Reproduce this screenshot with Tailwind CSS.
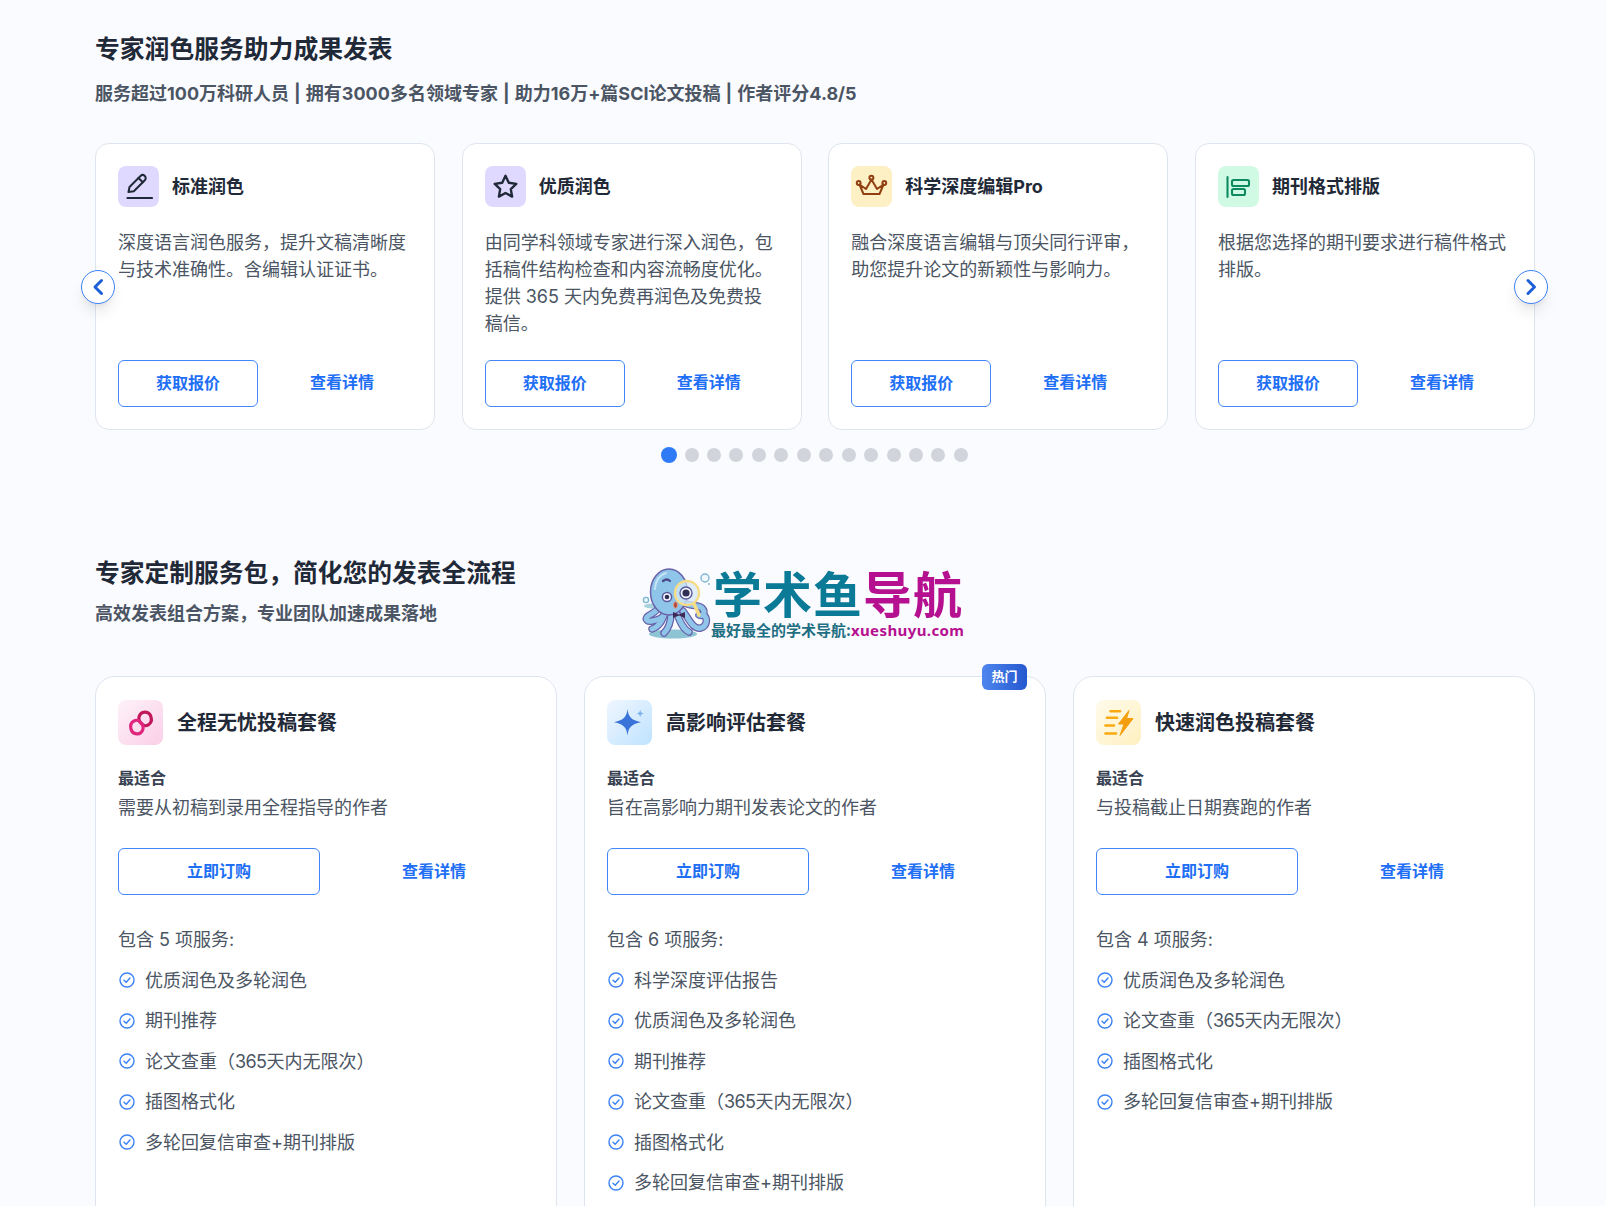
<!DOCTYPE html>
<html lang="zh">
<head>
<meta charset="utf-8">
<script src="https://cdn.jsdelivr.net/npm/@tailwindcss/browser@4"></script>
</head>
<body class="bg-[#fafbff] font-['Inter','Noto_Sans_CJK_SC',sans-serif] text-[#1f2937]">
<div class="h-[1206px] overflow-hidden">
<main class="relative w-[1440px] ml-[95px]">
  <div class="pt-[33px]">

  <section>
    <h2 class="text-[24.8px] leading-[32px] font-bold text-[#1f2937]">专家润色服务助力成果发表</h2>
    <p class="mt-[15px] text-[18px] leading-[27px] font-bold text-[#4b5563] [word-spacing:0.8px]">服务超过100万科研人员 | 拥有3000多名领域专家 | 助力16万+篇SCI论文投稿 | 作者评分4.8/5</p>

    <div class="relative mt-[36px]">
      <div class="flex gap-[26.67px]">
        <article class="w-[340px] h-[287px] bg-white border border-[#dfe5ee] rounded-[14px] px-[22px] pt-[22px] pb-[22.5px] flex flex-col">
          <div class="flex items-center gap-[13px] h-[41px]">
            <span class="w-[41px] h-[41px] rounded-lg bg-[#e0d9ff] flex items-center justify-center shrink-0">
              <svg class="w-[28px] h-[28px]" viewBox="0 0 28 28" fill="none" stroke="#1f2937" stroke-width="2" stroke-linecap="round" stroke-linejoin="round"><path d="M3.5 19 L4.5 14 L15.5 3 a3 3 0 0 1 4.3 4.3 L8.8 18.3 Z"/><path d="M13.5 5 L17.8 9.3"/><path d="M2.5 25 H27" stroke-width="2.2"/></svg>
            </span>
            <h3 class="text-[18px] leading-[27px] font-bold text-[#1f2937]">标准润色</h3>
          </div>
          <p class="mt-[22px] text-[18px] leading-[27px] text-[#4b5563]">深度语言润色服务，提升文稿清晰度与技术准确性。含编辑认证证书。</p>
          <div class="mt-auto flex gap-[14px]">
            <a class="w-[140px] h-[47px] border-[1.5px] border-[#4287f5] rounded-md flex items-center justify-center text-[16px] font-semibold text-[#1e6ff5]">获取报价</a>
            <a class="w-[140px] h-[47px] flex items-center justify-center text-[16px] font-semibold text-[#1e6ff5] pb-[2px]">查看详情</a>
          </div>
        </article>

        <article class="w-[340px] h-[287px] bg-white border border-[#dfe5ee] rounded-[14px] px-[22px] pt-[22px] pb-[22.5px] flex flex-col">
          <div class="flex items-center gap-[13px] h-[41px]">
            <span class="w-[41px] h-[41px] rounded-lg bg-[#e0d9ff] flex items-center justify-center shrink-0">
              <svg class="w-[27px] h-[27px]" viewBox="0 0 24 24" fill="none" stroke="#1f2937" stroke-width="2.1" stroke-linejoin="round"><path d="M12 2.5 l2.9 6.2 6.7 .9 -4.9 4.7 1.2 6.7 -5.9-3.3 -5.9 3.3 1.2-6.7 -4.9-4.7 6.7-.9 Z"/></svg>
            </span>
            <h3 class="text-[18px] leading-[27px] font-bold text-[#1f2937]">优质润色</h3>
          </div>
          <p class="mt-[22px] text-[18px] leading-[27px] text-[#4b5563]">由同学科领域专家进行深入润色，包括稿件结构检查和内容流畅度优化。提供 365 天内免费再润色及免费投稿信。</p>
          <div class="mt-auto flex gap-[14px]">
            <a class="w-[140px] h-[47px] border-[1.5px] border-[#4287f5] rounded-md flex items-center justify-center text-[16px] font-semibold text-[#1e6ff5]">获取报价</a>
            <a class="w-[140px] h-[47px] flex items-center justify-center text-[16px] font-semibold text-[#1e6ff5] pb-[2px]">查看详情</a>
          </div>
        </article>

        <article class="w-[340px] h-[287px] bg-white border border-[#dfe5ee] rounded-[14px] px-[22px] pt-[22px] pb-[22.5px] flex flex-col">
          <div class="flex items-center gap-[13px] h-[41px]">
            <span class="w-[41px] h-[41px] rounded-lg bg-[#fdf0c4] shrink-0">
              <svg class="w-[41px] h-[41px]" viewBox="0 0 41 41" fill="none" stroke="#8f3f10" stroke-width="2" stroke-linecap="round" stroke-linejoin="round"><path d="M8.5 18.5 L12.5 28 H28.5 L32.5 18.5 L26 23 L20.5 13.5 L15 23 Z"/><circle cx="7.7" cy="17" r="1.9"/><circle cx="20.4" cy="11.7" r="2"/><circle cx="33.3" cy="17" r="1.9"/></svg>
            </span>
            <h3 class="text-[18px] leading-[27px] font-bold text-[#1f2937]">科学深度编辑Pro</h3>
          </div>
          <p class="mt-[22px] text-[18px] leading-[27px] text-[#4b5563]">融合深度语言编辑与顶尖同行评审，助您提升论文的新颖性与影响力。</p>
          <div class="mt-auto flex gap-[14px]">
            <a class="w-[140px] h-[47px] border-[1.5px] border-[#4287f5] rounded-md flex items-center justify-center text-[16px] font-semibold text-[#1e6ff5]">获取报价</a>
            <a class="w-[140px] h-[47px] flex items-center justify-center text-[16px] font-semibold text-[#1e6ff5] pb-[2px]">查看详情</a>
          </div>
        </article>

        <article class="w-[340px] h-[287px] bg-white border border-[#dfe5ee] rounded-[14px] px-[22px] pt-[22px] pb-[22.5px] flex flex-col">
          <div class="flex items-center gap-[13px] h-[41px]">
            <span class="w-[41px] h-[41px] rounded-lg bg-[#d1fae5] flex items-center justify-center shrink-0">
              <svg class="w-[28px] h-[28px]" viewBox="0 0 28 28" fill="none" stroke="#0d8a60" stroke-width="2.1" stroke-linecap="round" stroke-linejoin="round"><path d="M3.5 4 V24"/><rect x="8" y="7" width="17" height="6" rx="1.5"/><rect x="8" y="16" width="13" height="6" rx="1.5"/></svg>
            </span>
            <h3 class="text-[18px] leading-[27px] font-bold text-[#1f2937]">期刊格式排版</h3>
          </div>
          <p class="mt-[22px] text-[18px] leading-[27px] text-[#4b5563]">根据您选择的期刊要求进行稿件格式排版。</p>
          <div class="mt-auto flex gap-[14px]">
            <a class="w-[140px] h-[47px] border-[1.5px] border-[#4287f5] rounded-md flex items-center justify-center text-[16px] font-semibold text-[#1e6ff5]">获取报价</a>
            <a class="w-[140px] h-[47px] flex items-center justify-center text-[16px] font-semibold text-[#1e6ff5] pb-[2px]">查看详情</a>
          </div>
        </article>
      </div>

      <button class="absolute left-[-14px] top-[127px] w-[34px] h-[34px] rounded-full bg-white border-[1.5px] border-[#3b82f6] shadow-lg flex items-center justify-center">
        <svg class="w-[18px] h-[18px]" viewBox="0 0 18 18" fill="none" stroke="#1d5fd8" stroke-width="3" stroke-linecap="round" stroke-linejoin="round"><path d="M12.5 2.5 L6 9 L12.5 15.5"/></svg>
      </button>
      <button class="absolute right-[-13px] top-[127px] w-[34px] h-[34px] rounded-full bg-white border-[1.5px] border-[#3b82f6] shadow-lg flex items-center justify-center">
        <svg class="w-[18px] h-[18px]" viewBox="0 0 18 18" fill="none" stroke="#1d5fd8" stroke-width="3" stroke-linecap="round" stroke-linejoin="round"><path d="M6 2.5 L12.5 9 L6 15.5"/></svg>
      </button>
    </div>

    <div class="flex justify-center mt-[17px]">
      <span class="w-[22.46px] h-[16px] flex items-center justify-center"><i class="block w-[16px] h-[16px] rounded-full bg-[#2f7bf6]"></i></span>
      <span class="w-[22.46px] h-[16px] flex items-center justify-center"><i class="block w-[14px] h-[14px] rounded-full bg-[#d1d5db]"></i></span>
      <span class="w-[22.46px] h-[16px] flex items-center justify-center"><i class="block w-[14px] h-[14px] rounded-full bg-[#d1d5db]"></i></span>
      <span class="w-[22.46px] h-[16px] flex items-center justify-center"><i class="block w-[14px] h-[14px] rounded-full bg-[#d1d5db]"></i></span>
      <span class="w-[22.46px] h-[16px] flex items-center justify-center"><i class="block w-[14px] h-[14px] rounded-full bg-[#d1d5db]"></i></span>
      <span class="w-[22.46px] h-[16px] flex items-center justify-center"><i class="block w-[14px] h-[14px] rounded-full bg-[#d1d5db]"></i></span>
      <span class="w-[22.46px] h-[16px] flex items-center justify-center"><i class="block w-[14px] h-[14px] rounded-full bg-[#d1d5db]"></i></span>
      <span class="w-[22.46px] h-[16px] flex items-center justify-center"><i class="block w-[14px] h-[14px] rounded-full bg-[#d1d5db]"></i></span>
      <span class="w-[22.46px] h-[16px] flex items-center justify-center"><i class="block w-[14px] h-[14px] rounded-full bg-[#d1d5db]"></i></span>
      <span class="w-[22.46px] h-[16px] flex items-center justify-center"><i class="block w-[14px] h-[14px] rounded-full bg-[#d1d5db]"></i></span>
      <span class="w-[22.46px] h-[16px] flex items-center justify-center"><i class="block w-[14px] h-[14px] rounded-full bg-[#d1d5db]"></i></span>
      <span class="w-[22.46px] h-[16px] flex items-center justify-center"><i class="block w-[14px] h-[14px] rounded-full bg-[#d1d5db]"></i></span>
      <span class="w-[22.46px] h-[16px] flex items-center justify-center"><i class="block w-[14px] h-[14px] rounded-full bg-[#d1d5db]"></i></span>
      <span class="w-[22.46px] h-[16px] flex items-center justify-center"><i class="block w-[14px] h-[14px] rounded-full bg-[#d1d5db]"></i></span>
    </div>
  </section>

  <section class="mt-[94px]">
    <h2 class="text-[24.75px] leading-[32px] font-bold text-[#1f2937]">专家定制服务包，简化您的发表全流程</h2>
    <p class="mt-[10.5px] text-[18px] leading-[27px] font-bold text-[#4b5563]">高效发表组合方案，专业团队加速成果落地</p>

    <div class="mt-[49.5px] grid grid-cols-3 gap-[27px]">
      <article class="relative h-[600px] bg-white border border-[#dfe5ee] rounded-[20px] px-[22px] pt-[23px]">
        <div class="flex items-center gap-[14px]">
          <span class="w-[45px] h-[45px] rounded-lg bg-linear-to-br from-[#fdf2f8] to-[#fbcfe8] flex items-center justify-center shrink-0">
            <svg class="w-[30px] h-[30px]" viewBox="0 0 30 30" fill="none" stroke-width="3.2" stroke-linecap="round"><path d="M15 15 C19 21 27 16 25 9 C23.5 3 15 2 13 9 C12.4 11 13 12.5 14 14" stroke="#c2185b"/><path d="M15 15 C11 9 3 14 5 21 C6.5 27 15 28 17 21 C17.6 19 17 17.5 16 16" stroke="#e0267f"/></svg>
          </span>
          <h3 class="text-[20px] leading-[28px] font-bold text-[#1f2937]">全程无忧投稿套餐</h3>
        </div>
        <p class="mt-[21px] text-[16px] leading-[24px] font-semibold text-[#374151]">最适合</p>
        <p class="mt-[4px] text-[18px] leading-[27px] text-[#4b5563]">需要从初稿到录用全程指导的作者</p>
        <div class="mt-[26.5px] flex gap-[14px]">
          <a class="flex-1 h-[47px] border-[1.5px] border-[#4287f5] rounded-md flex items-center justify-center text-[16px] font-semibold text-[#1e6ff5]">立即订购</a>
          <a class="flex-1 h-[47px] flex items-center justify-center text-[16px] font-semibold text-[#1e6ff5]">查看详情</a>
        </div>
        <p class="mt-[31.5px] text-[18px] leading-[27px] text-[#4b5563]">包含 5 项服务:</p>
        <ul class="mt-[13.5px] flex flex-col gap-[13.5px] text-[18px] leading-[27px] text-[#4b5563]">
          <li class="flex items-center gap-[10px]"><svg class="ml-px w-[16px] h-[16px] shrink-0" viewBox="0 0 16 16" fill="none" stroke="#3b82f6" stroke-width="1.4" stroke-linecap="round" stroke-linejoin="round"><circle cx="8" cy="8" r="7"/><path d="M5 8.2 L7.2 10.2 L11 6"/></svg><span>优质润色及多轮润色</span></li>
          <li class="flex items-center gap-[10px]"><svg class="ml-px w-[16px] h-[16px] shrink-0" viewBox="0 0 16 16" fill="none" stroke="#3b82f6" stroke-width="1.4" stroke-linecap="round" stroke-linejoin="round"><circle cx="8" cy="8" r="7"/><path d="M5 8.2 L7.2 10.2 L11 6"/></svg><span>期刊推荐</span></li>
          <li class="flex items-center gap-[10px]"><svg class="ml-px w-[16px] h-[16px] shrink-0" viewBox="0 0 16 16" fill="none" stroke="#3b82f6" stroke-width="1.4" stroke-linecap="round" stroke-linejoin="round"><circle cx="8" cy="8" r="7"/><path d="M5 8.2 L7.2 10.2 L11 6"/></svg><span>论文查重（<span class="tracking-[-0.6px]">365</span>天内无限次）</span></li>
          <li class="flex items-center gap-[10px]"><svg class="ml-px w-[16px] h-[16px] shrink-0" viewBox="0 0 16 16" fill="none" stroke="#3b82f6" stroke-width="1.4" stroke-linecap="round" stroke-linejoin="round"><circle cx="8" cy="8" r="7"/><path d="M5 8.2 L7.2 10.2 L11 6"/></svg><span>插图格式化</span></li>
          <li class="flex items-center gap-[10px]"><svg class="ml-px w-[16px] h-[16px] shrink-0" viewBox="0 0 16 16" fill="none" stroke="#3b82f6" stroke-width="1.4" stroke-linecap="round" stroke-linejoin="round"><circle cx="8" cy="8" r="7"/><path d="M5 8.2 L7.2 10.2 L11 6"/></svg><span>多轮回复信审查+期刊排版</span></li>
        </ul>
      </article>

      <article class="relative h-[600px] bg-white border border-[#dfe5ee] rounded-[20px] px-[22px] pt-[23px]">
        <span class="absolute right-[18px] top-[-13px] h-[26px] w-[45px] rounded-[6px] bg-linear-to-r from-[#4f86ee] to-[#2557cf] text-white text-[13px] font-bold flex items-center justify-center">热门</span>
        <div class="flex items-center gap-[14px]">
          <span class="w-[45px] h-[45px] rounded-lg bg-linear-to-br from-[#eff6ff] to-[#bfe3ff] flex items-center justify-center shrink-0">
            <svg class="w-[36px] h-[36px]" viewBox="0 0 36 36"><path d="M15.5 4 C16.5 12 19 15 29 17.2 C19 19.4 16.5 22.4 15.5 30.4 C14.5 22.4 12 19.4 2 17.2 C12 15 14.5 12 15.5 4 Z" fill="#3b74d8"/><path d="M28.2 4.5 C28.6 7 29.2 7.8 32 8.5 C29.2 9.2 28.6 10 28.2 12.5 C27.8 10 27.2 9.2 24.4 8.5 C27.2 7.8 27.8 7 28.2 4.5 Z" fill="#7fb3ee"/></svg>
          </span>
          <h3 class="text-[20px] leading-[28px] font-bold text-[#1f2937]">高影响评估套餐</h3>
        </div>
        <p class="mt-[21px] text-[16px] leading-[24px] font-semibold text-[#374151]">最适合</p>
        <p class="mt-[4px] text-[18px] leading-[27px] text-[#4b5563]">旨在高影响力期刊发表论文的作者</p>
        <div class="mt-[26.5px] flex gap-[14px]">
          <a class="flex-1 h-[47px] border-[1.5px] border-[#4287f5] rounded-md flex items-center justify-center text-[16px] font-semibold text-[#1e6ff5]">立即订购</a>
          <a class="flex-1 h-[47px] flex items-center justify-center text-[16px] font-semibold text-[#1e6ff5]">查看详情</a>
        </div>
        <p class="mt-[31.5px] text-[18px] leading-[27px] text-[#4b5563]">包含 6 项服务:</p>
        <ul class="mt-[13.5px] flex flex-col gap-[13.5px] text-[18px] leading-[27px] text-[#4b5563]">
          <li class="flex items-center gap-[10px]"><svg class="ml-px w-[16px] h-[16px] shrink-0" viewBox="0 0 16 16" fill="none" stroke="#3b82f6" stroke-width="1.4" stroke-linecap="round" stroke-linejoin="round"><circle cx="8" cy="8" r="7"/><path d="M5 8.2 L7.2 10.2 L11 6"/></svg><span>科学深度评估报告</span></li>
          <li class="flex items-center gap-[10px]"><svg class="ml-px w-[16px] h-[16px] shrink-0" viewBox="0 0 16 16" fill="none" stroke="#3b82f6" stroke-width="1.4" stroke-linecap="round" stroke-linejoin="round"><circle cx="8" cy="8" r="7"/><path d="M5 8.2 L7.2 10.2 L11 6"/></svg><span>优质润色及多轮润色</span></li>
          <li class="flex items-center gap-[10px]"><svg class="ml-px w-[16px] h-[16px] shrink-0" viewBox="0 0 16 16" fill="none" stroke="#3b82f6" stroke-width="1.4" stroke-linecap="round" stroke-linejoin="round"><circle cx="8" cy="8" r="7"/><path d="M5 8.2 L7.2 10.2 L11 6"/></svg><span>期刊推荐</span></li>
          <li class="flex items-center gap-[10px]"><svg class="ml-px w-[16px] h-[16px] shrink-0" viewBox="0 0 16 16" fill="none" stroke="#3b82f6" stroke-width="1.4" stroke-linecap="round" stroke-linejoin="round"><circle cx="8" cy="8" r="7"/><path d="M5 8.2 L7.2 10.2 L11 6"/></svg><span>论文查重（<span class="tracking-[-0.6px]">365</span>天内无限次）</span></li>
          <li class="flex items-center gap-[10px]"><svg class="ml-px w-[16px] h-[16px] shrink-0" viewBox="0 0 16 16" fill="none" stroke="#3b82f6" stroke-width="1.4" stroke-linecap="round" stroke-linejoin="round"><circle cx="8" cy="8" r="7"/><path d="M5 8.2 L7.2 10.2 L11 6"/></svg><span>插图格式化</span></li>
          <li class="flex items-center gap-[10px]"><svg class="ml-px w-[16px] h-[16px] shrink-0" viewBox="0 0 16 16" fill="none" stroke="#3b82f6" stroke-width="1.4" stroke-linecap="round" stroke-linejoin="round"><circle cx="8" cy="8" r="7"/><path d="M5 8.2 L7.2 10.2 L11 6"/></svg><span>多轮回复信审查+期刊排版</span></li>
        </ul>
      </article>

      <article class="relative h-[600px] bg-white border border-[#dfe5ee] rounded-[20px] px-[22px] pt-[23px]">
        <div class="flex items-center gap-[14px]">
          <span class="w-[45px] h-[45px] rounded-lg bg-linear-to-br from-[#fffbeb] to-[#fef0c0] flex items-center justify-center shrink-0">
            <svg class="w-[34px] h-[34px]" viewBox="0 0 34 34"><path d="M27 4.5 L16.5 18 H22 L18 29.5 L31 12.5 H24.5 Z" fill="#f59e0b" stroke="#f59e0b" stroke-width="1" stroke-linejoin="round"/><path d="M8.5 5.2 H18 M5 11.8 H15 M3.5 19.5 H12 M3.5 27.5 H14" stroke="#f9a90f" stroke-width="2.6" stroke-linecap="round"/></svg>
          </span>
          <h3 class="text-[20px] leading-[28px] font-bold text-[#1f2937]">快速润色投稿套餐</h3>
        </div>
        <p class="mt-[21px] text-[16px] leading-[24px] font-semibold text-[#374151]">最适合</p>
        <p class="mt-[4px] text-[18px] leading-[27px] text-[#4b5563]">与投稿截止日期赛跑的作者</p>
        <div class="mt-[26.5px] flex gap-[14px]">
          <a class="flex-1 h-[47px] border-[1.5px] border-[#4287f5] rounded-md flex items-center justify-center text-[16px] font-semibold text-[#1e6ff5]">立即订购</a>
          <a class="flex-1 h-[47px] flex items-center justify-center text-[16px] font-semibold text-[#1e6ff5]">查看详情</a>
        </div>
        <p class="mt-[31.5px] text-[18px] leading-[27px] text-[#4b5563]">包含 4 项服务:</p>
        <ul class="mt-[13.5px] flex flex-col gap-[13.5px] text-[18px] leading-[27px] text-[#4b5563]">
          <li class="flex items-center gap-[10px]"><svg class="ml-px w-[16px] h-[16px] shrink-0" viewBox="0 0 16 16" fill="none" stroke="#3b82f6" stroke-width="1.4" stroke-linecap="round" stroke-linejoin="round"><circle cx="8" cy="8" r="7"/><path d="M5 8.2 L7.2 10.2 L11 6"/></svg><span>优质润色及多轮润色</span></li>
          <li class="flex items-center gap-[10px]"><svg class="ml-px w-[16px] h-[16px] shrink-0" viewBox="0 0 16 16" fill="none" stroke="#3b82f6" stroke-width="1.4" stroke-linecap="round" stroke-linejoin="round"><circle cx="8" cy="8" r="7"/><path d="M5 8.2 L7.2 10.2 L11 6"/></svg><span>论文查重（<span class="tracking-[-0.6px]">365</span>天内无限次）</span></li>
          <li class="flex items-center gap-[10px]"><svg class="ml-px w-[16px] h-[16px] shrink-0" viewBox="0 0 16 16" fill="none" stroke="#3b82f6" stroke-width="1.4" stroke-linecap="round" stroke-linejoin="round"><circle cx="8" cy="8" r="7"/><path d="M5 8.2 L7.2 10.2 L11 6"/></svg><span>插图格式化</span></li>
          <li class="flex items-center gap-[10px]"><svg class="ml-px w-[16px] h-[16px] shrink-0" viewBox="0 0 16 16" fill="none" stroke="#3b82f6" stroke-width="1.4" stroke-linecap="round" stroke-linejoin="round"><circle cx="8" cy="8" r="7"/><path d="M5 8.2 L7.2 10.2 L11 6"/></svg><span>多轮回复信审查+期刊排版</span></li>
        </ul>
      </article>
    </div>
  </section>
  </div>

  <!-- watermark logo laid over the page -->
  <div class="absolute left-[546px] top-[565px] w-[340px] h-[80px]">
    <svg class="absolute left-[0px] top-[2px] w-[72px] h-[72px]" viewBox="0 0 72 72" fill="none" stroke-linecap="round">
      <ellipse cx="32" cy="67" rx="24" ry="4.5" fill="#8cc4d4"/>
      <ellipse cx="11" cy="39" rx="8" ry="2.5" fill="#a6d3de"/>
      <g stroke="#6a63ab" stroke-width="7.5">
        <path d="M19 38 C16 46 10 46 6 50 C4 53 7 55 11 54 C18 53 24 49 26 44"/>
        <path d="M24 44 C22 54 17 60 11 62"/>
        <path d="M30 46 C30 54 28 61 23 66"/>
        <path d="M36 47 C39 55 42 62 48 65"/>
        <path d="M42 44 C48 52 52 63 60 61 C66 59 67 52 63 48"/>
        <path d="M44 36 C50 40 57 37 61 41 C65 45 62 50 58 48"/>
      </g>
      <g stroke="#8fc5e8" stroke-width="5">
        <path d="M19 38 C16 46 10 46 6 50 C4 53 7 55 11 54 C18 53 24 49 26 44"/>
        <path d="M24 44 C22 54 17 60 11 62"/>
        <path d="M30 46 C30 54 28 61 23 66"/>
        <path d="M36 47 C39 55 42 62 48 65"/>
        <path d="M42 44 C48 52 52 63 60 61 C66 59 67 52 63 48"/>
        <path d="M44 36 C50 40 57 37 61 41 C65 45 62 50 58 48"/>
      </g>
      <ellipse cx="28" cy="25" rx="18.5" ry="23" fill="#8fc5e8" stroke="#6a63ab" stroke-width="1.5"/>
      <path d="M14 22 Q15 9 25 6" stroke="#c6e3f5" stroke-width="2"/>
      <circle cx="26" cy="30" r="4.6" fill="#f5f7ff" stroke="#5a5a9a" stroke-width="1.5"/>
      <circle cx="26" cy="30" r="2.3" fill="#2f2f55"/>
      <path d="M22 14 Q26 11 29 14" stroke="#4a4a8c" stroke-width="2.2"/>
      <circle cx="46" cy="26" r="12" fill="#d6e8f7" fill-opacity="0.75" stroke="#f7dc86" stroke-width="2.4"/>
      <circle cx="45" cy="26" r="6" fill="#f5f7ff" stroke="#5a5a9a" stroke-width="1.4"/>
      <circle cx="45" cy="26" r="3.6" fill="#2f2f55"/>
      <path d="M53 37 L58 48" stroke="#f7dc86" stroke-width="3.4"/>
      <ellipse cx="34.5" cy="38" rx="2" ry="3.2" fill="#a9473a" stroke="#e8a089" stroke-width="1"/>
      <path d="M32 45 L38 47.5 L44 45 L44 51 L38 48.5 L32 51 Z" fill="#3f2a55"/>
      <circle cx="5" cy="33" r="2.6" stroke="#7fb6cf" stroke-width="1.4" fill="#f0f8fc"/>
      <circle cx="64" cy="11" r="4" stroke="#7fb6cf" stroke-width="1.4" fill="#f0f8fc"/>
      <circle cx="68" cy="17" r="1" fill="#7fb6cf"/>
    </svg>
    <div class="absolute left-[72px] top-[2px] flex text-[49px] leading-[50px] tracking-[1px] font-bold font-['Noto_Sans_CJK_SC',sans-serif] whitespace-nowrap"><span class="text-[#0a7a96]">学术鱼</span><span class="text-[#b5108f]">导航</span></div>
    <div class="absolute left-[70px] top-[55px] flex text-[15px] leading-[20px] font-bold whitespace-nowrap font-['Noto_Sans_CJK_SC',sans-serif]"><span class="text-[#1f6f82]">最好最全的学术导航:</span><span class="text-[#b5108f] font-['Noto_Sans',sans-serif] tracking-[0.4px]">xueshuyu.com</span></div>
  </div>
</main>
</div>
</body>
</html>
